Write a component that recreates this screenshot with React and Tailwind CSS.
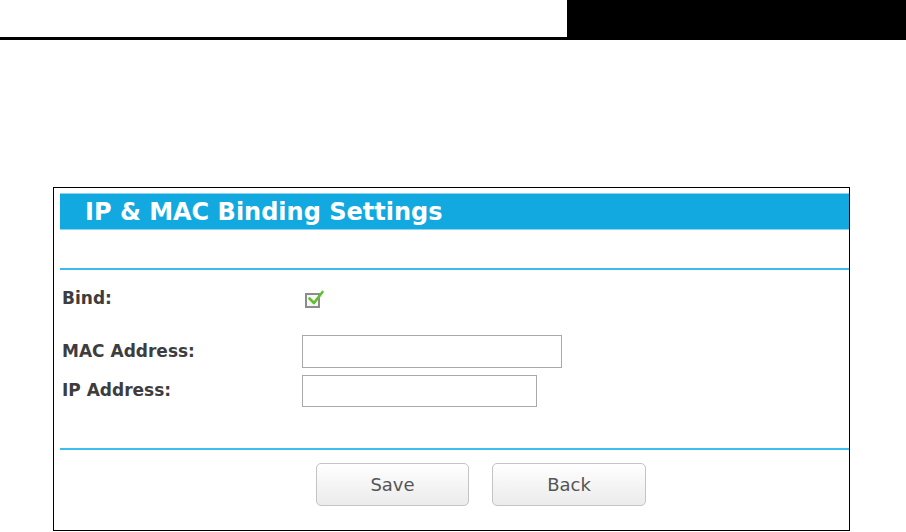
import { useState } from "react";

const labelFont = { fontFamily: '"DejaVu Sans", Verdana, sans-serif' };

function Row({ label, children, className = "" }) {
  return (
    <div className={`flex items-center ${className}`}>
      <div className="w-[242px] pl-[2px] text-[17px] font-bold text-[#3d3d3d]">{label}</div>
      {children}
    </div>
  );
}

export default function App() {
  const [bind, setBind] = useState(true);

  return (
    <div className="w-[906px] h-[532px] bg-white overflow-hidden" style={labelFont}>
      {/* top page header */}
      <div className="flex h-[40px]">
        <div className="flex-1 border-b-[3px] border-black" />
        <div className="w-[339px] bg-black" />
      </div>

      <div className="ml-[53px] mt-[147px] w-[797px] h-[344px] border border-black pl-[6px] pt-[5px]">
        <div className="h-[37px] bg-[#12a9e0] border-y border-[#8fd3f0] flex items-center pl-[25px]">
          <span className="text-white font-bold text-[24px] leading-none">IP &amp; MAC Binding Settings</span>
        </div>

        <div className="mt-[38px] h-[2px] bg-[#3cbcef]" />

        <Row label="Bind:" className="mt-[20px] h-[18px]">
          <button
            onClick={() => setBind(!bind)}
            className="relative ml-[3px] mt-[3px] w-[15px] h-[15px] border-2 border-[#8c8c8c] bg-[#f6f6f6]"
          >
            {bind && (
              <svg width="18" height="17" viewBox="0 0 18 17" className="absolute left-[0px] -top-[6px]">
                <path d="M2.5 9.5 L7 14 L15.5 3" fill="none" stroke="#62bf2c" strokeWidth="2.6" strokeLinecap="round" strokeLinejoin="round" />
              </svg>
            )}
          </button>
        </Row>

        <Row label="MAC Address:" className="mt-[27px]">
          <input className="w-[260px] h-[33px] border border-[#a9a9a9] outline-none px-1" />
        </Row>

        <Row label="IP Address:" className="mt-[7px]">
          <input className="w-[235px] h-[32px] border border-[#a9a9a9] outline-none px-1" />
        </Row>

        <div className="mt-[41px] h-[2px] bg-[#3cbcef]" />

        <div className="mt-[13px] flex gap-[23px] pl-[256px]">
          <button className="w-[153px] h-[43px] rounded-[5px] border border-[#c4c4c4] bg-gradient-to-b from-white to-[#ebebeb] text-[18px] text-[#555]">
            Save
          </button>
          <button className="w-[154px] h-[43px] rounded-[5px] border border-[#c4c4c4] bg-gradient-to-b from-white to-[#ebebeb] text-[18px] text-[#555]">
            Back
          </button>
        </div>
      </div>
    </div>
  );
}
